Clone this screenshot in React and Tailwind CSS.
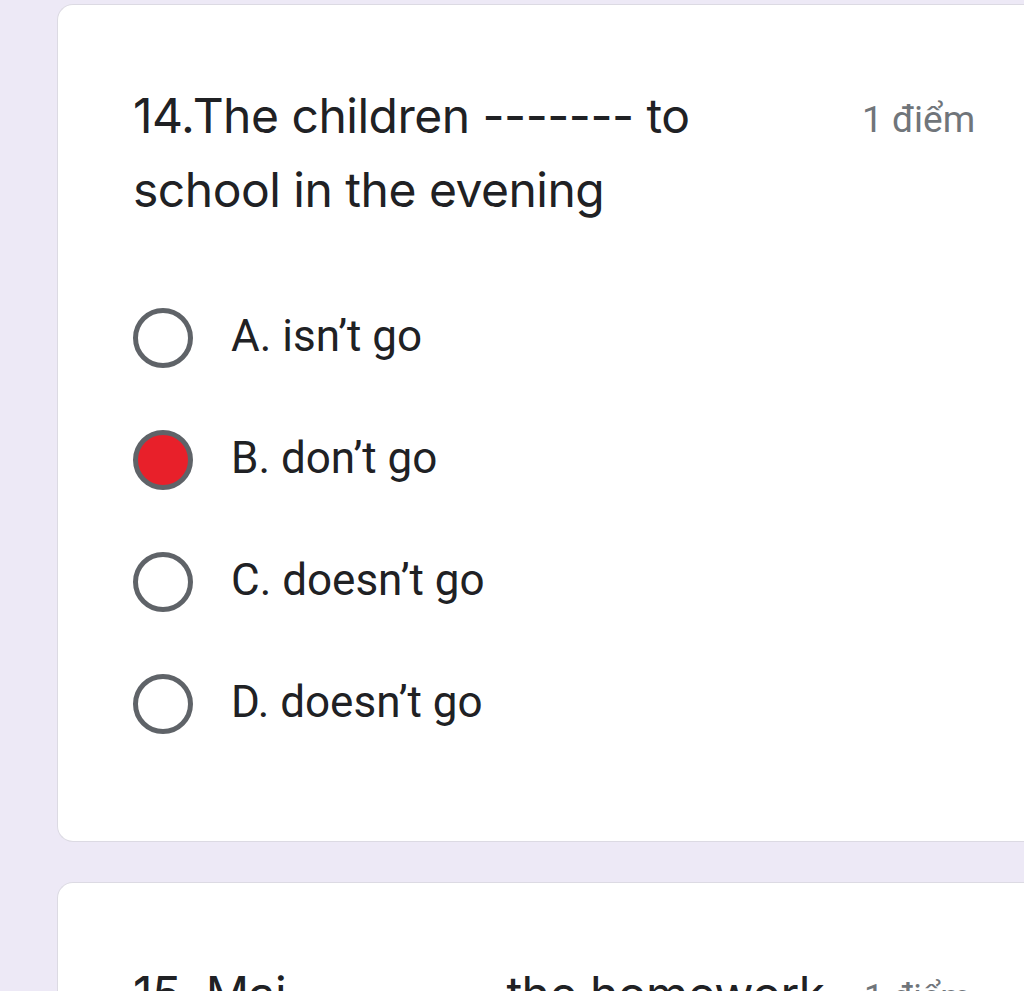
export default function App() {
  const options = [
    { label: "A. isn’t go", checked: false },
    { label: "B. don’t go", checked: true },
    { label: "C. doesn’t go", checked: false },
    { label: "D. doesn’t go", checked: false },
  ];
  return (
    <div className="h-[991px] w-[1024px] overflow-hidden bg-[#ede9f6] pl-[57px] pt-[4px]" style={{ fontFamily: "Roboto, 'Liberation Sans', sans-serif" }}>
      <div className="h-[838px] w-[1000px] rounded-l-[16px] border border-r-0 border-[#dcdae3] bg-white pl-[75px]">
        <div className="flex pt-[74px]">
          <div className="w-[600px] text-[48px] leading-[74px] tracking-[-0.5px] text-[#202124]" style={{ fontFamily: "Inter, Roboto, sans-serif" }}>
            14.The children ------- to school in the evening
          </div>
          <div className="ml-[129px] pt-[21px] text-[37px] leading-[40px] text-[#70757a]">1 điểm</div>
        </div>
        <div className="mt-[81px] flex flex-col gap-[62px]">
          {options.map((o) => (
            <div key={o.label} className="flex h-[60px] items-center gap-[38px]">
              <div className={`h-[60px] w-[60px] shrink-0 rounded-full border-[5px] border-[#5f6368] ${o.checked ? "bg-[#e8202a]" : "bg-white"}`} />
              <span className="pb-[4px] text-[44px] leading-[60px] text-[#202124]">{o.label}</span>
            </div>
          ))}
        </div>
      </div>
      <div className="mt-[40px] h-[200px] w-[1000px] rounded-l-[16px] border border-r-0 border-[#dcdae3] bg-white pl-[75px] pt-[74px]">
        <div className="flex items-start">
          <div className="w-[731px] whitespace-nowrap text-[48px] leading-[74px] tracking-[-0.5px] text-[#202124]" style={{ fontFamily: "Inter, Roboto, sans-serif" }}>
            15. Mai --------- the homework
          </div>
          <div className="pt-[21px] text-[35px] leading-[40px] text-[#70757a]">1 điểm</div>
        </div>
      </div>
    </div>
  );
}
